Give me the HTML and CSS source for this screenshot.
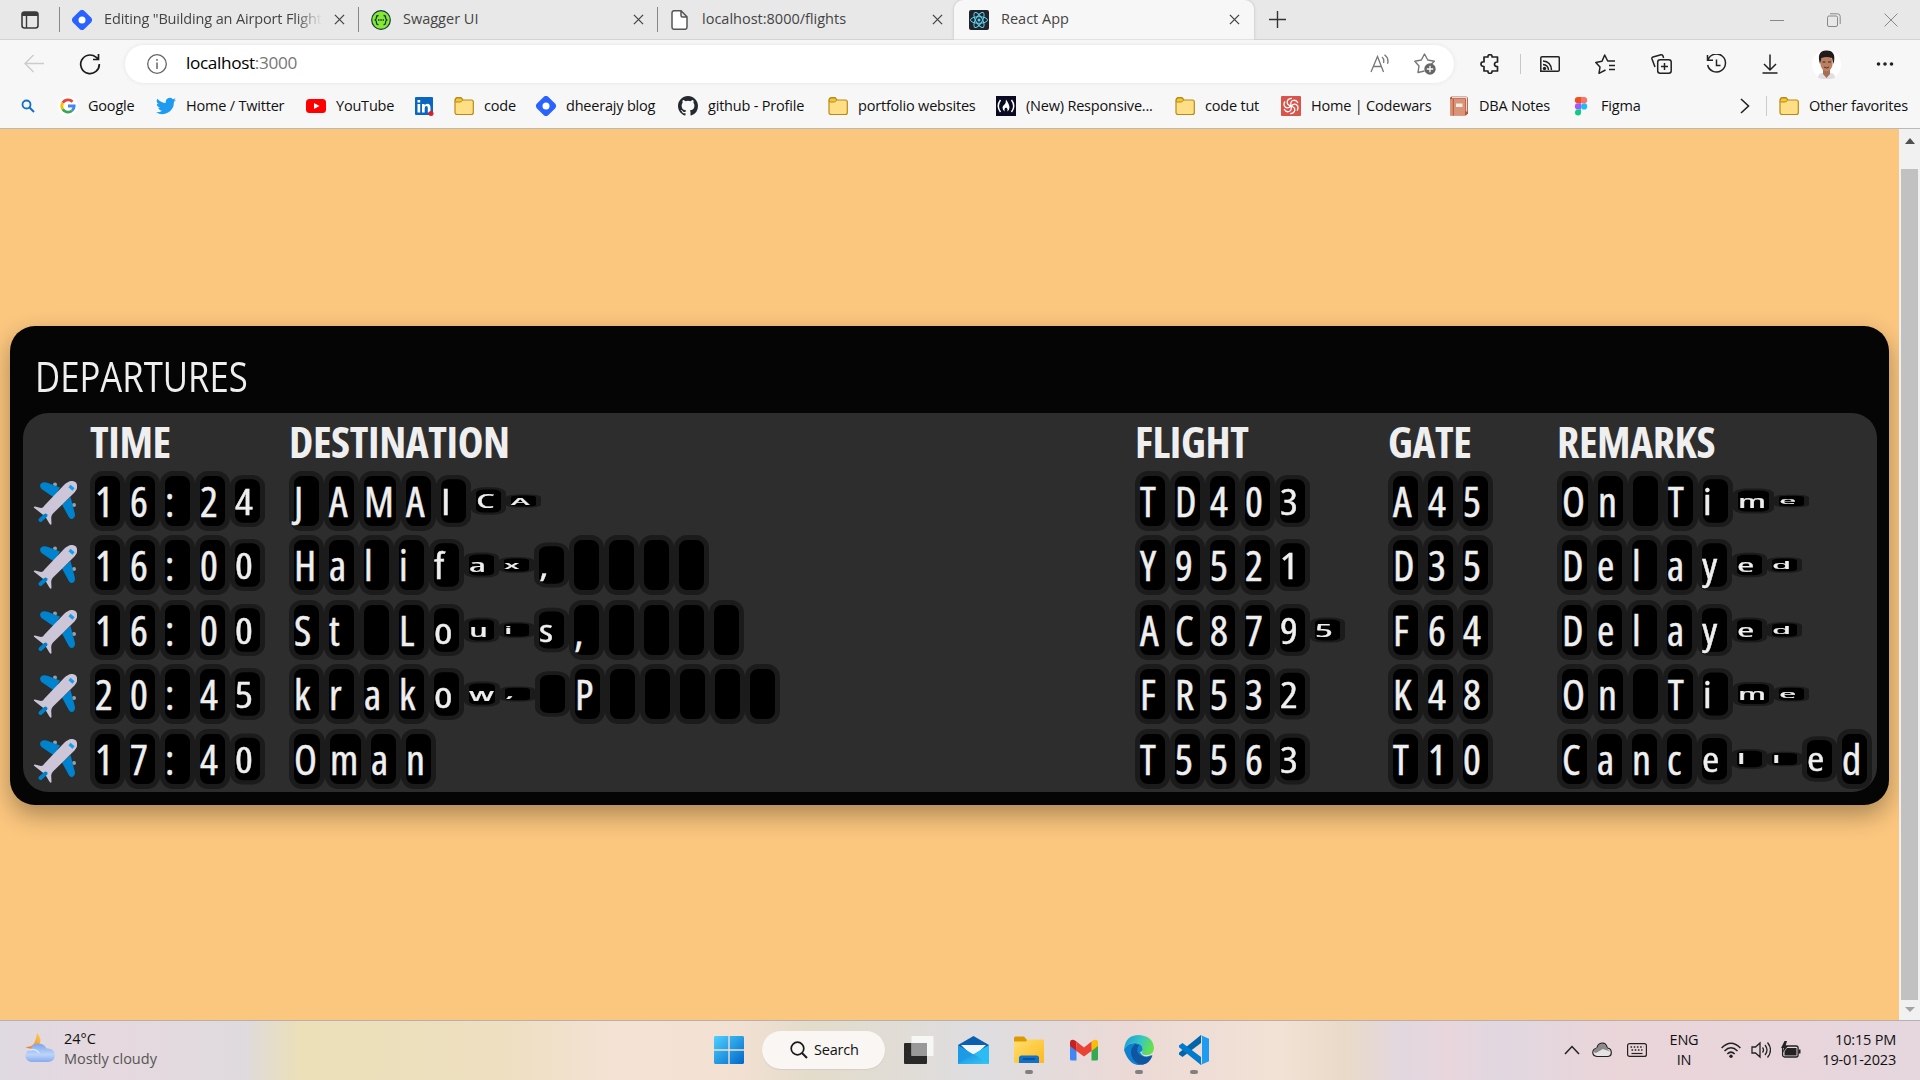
FILE: index.html
```
<!DOCTYPE html>
<html lang="en">
<head>
<meta charset="utf-8">
<title>React App</title>
<link rel="stylesheet" href="styles.css">
</head>
<body>
<svg class="defs" width="0" height="0">
  <defs>
    <symbol id="x" viewBox="0 0 12 12"><path d="M1 1l10 10M11 1L1 11" fill="none" stroke="currentColor" stroke-width="1.4"/></symbol>
    <symbol id="hash" viewBox="0 0 20 20"><path d="M7.600 1Q10-1.200 12.400 1L19 7.600Q21.200 10 19 12.400L12.400 19Q10 21.200 7.600 19L1 12.400Q-1.200 10 1 7.600Z" fill="#2962ff"/><circle cx="10" cy="10" r="3.5" fill="#fff"/></symbol>
    <symbol id="folder" viewBox="0 0 20 20"><path d="M1 4.500Q1 1.700 3.500 1.700H7L9 4h8.500Q19.300 4 19.300 6v10.500q0 2-2 2h-14Q1 18.500 1 16.500Z" fill="#ffdf85" stroke="#b98a12" stroke-width="1.200"/><path d="M1.300 5.500V4.300Q1.300 2 3.500 2H7l1.700 2-2 2H1.500Z" fill="#f3c63c" stroke="#b98a12"/></symbol>
    <linearGradient id="blue" x1="0" y1="0" x2="1" y2="1"><stop offset="0" stop-color="#4fd0ff"/><stop offset="1" stop-color="#0067c8"/></linearGradient>
    <linearGradient id="cloud" x1="0" y1="0" x2="0" y2="1"><stop offset="0" stop-color="#7ba4ee"/><stop offset=".6" stop-color="#bdd4f8"/><stop offset="1" stop-color="#86aaf0"/></linearGradient>
    <linearGradient id="moon" x1="0" y1="1" x2="1" y2="0"><stop offset="0" stop-color="#f0731d"/><stop offset="1" stop-color="#fcd053"/></linearGradient>
    <linearGradient id="files" x1="0" y1="0" x2="1" y2="1"><stop offset="0" stop-color="#ffdf70"/><stop offset="1" stop-color="#fcb91c"/></linearGradient>
    <linearGradient id="edgeTop" x1="0" y1="0" x2="1" y2=".3"><stop offset="0" stop-color="#159bdb"/><stop offset=".6" stop-color="#36c8c0"/><stop offset="1" stop-color="#64e050"/></linearGradient>
    <linearGradient id="mailFront" x1="0" y1="0" x2="1" y2="1"><stop offset="0" stop-color="#1c8ee0"/><stop offset="1" stop-color="#35c8f5"/></linearGradient>
    <symbol id="plane" viewBox="0 0 44 44"><g fill="#9aa0a6"><circle cx="22" cy="3.500" r="2"/><circle cx="41" cy="24" r="2"/></g><path d="M8 2.500Q11 .5 15 2l12 4.500-6 10L8.500 8Q6 5 8 2.500Z" fill="#0083cf"/><path d="M37.500 16l4.300 16.500q.8 4-2 5.300-2.500 1-4-1.800L29 23.500Z" fill="#0083cf"/><path d="M43 1.500q3 5-1.500 10L20 32.500q-1.500 1.500-1.800 4L18.500 43q-.5 1.500-1.800 0l-4.500-7.500L2 27.500Q-.5 25.500 2 25.500L8 27q2 0 3.500-2.500L31 4q7-6.500 12-2.500Z" fill="#cdc5d8"/><path d="M12.500 34.500L7.500 39" stroke="#0083cf" stroke-width="4" stroke-linecap="round"/><path d="M36.500 5l4 3.500" stroke="#10a0ee" stroke-width="3.200"/></symbol>
  </defs>
</svg>

<header class="browser">
  <div class="tabs">
    <div class="workspace"><svg width="18" height="18" viewBox="0 0 18 18"><rect x="1" y="1" width="16" height="16" rx="2.500" fill="none" stroke="#3b3b3b" stroke-width="1.600"/><path d="M1 5V3q0-2 2-2h12q2 0 2 2v2z" fill="#3b3b3b"/><path d="M5.500 5v12" stroke="#3b3b3b" stroke-width="1.400"/></svg></div>
    <div class="tab first"><svg width="20" height="20"><use href="#hash"/></svg><span class="title fade">Editing "Building an Airport Flight</span><svg class="close" width="11" height="11"><use href="#x"/></svg></div>
    <div class="tab"><svg width="20" height="20" viewBox="0 0 20 20"><circle cx="10" cy="10" r="9.300" fill="#85ea2d" stroke="#173647" stroke-width="1.200"/><path d="M7.500 5.500q-2 0-2 1.700t-1.300 2.800q1.300.8 1.300 2.800t2 1.700M12.500 5.500q2 0 2 1.700t1.300 2.800q-1.300.8-1.300 2.800t-2 1.700" fill="none" stroke="#173647" stroke-width="1.300"/><path d="M7 10h6" stroke="#173647" stroke-width="1.500" stroke-dasharray="1.500 .8"/></svg><span class="title">Swagger UI</span><svg class="close" width="11" height="11"><use href="#x"/></svg></div>
    <div class="tab"><svg width="20" height="20" viewBox="0 0 20 20"><path d="M2 3q0-2.300 2-2.300h7l6 6V17q0 2.300-2 2.300H4q-2 0-2-2.300zM11 1v4.500q0 1.500 1.500 1.500H17" fill="#fff" stroke="#555" stroke-width="1.500"/></svg><span class="title">localhost:8000/flights</span><svg class="close" width="11" height="11"><use href="#x"/></svg></div>
    <div class="tab active"><svg width="20" height="20" viewBox="0 0 20 20"><rect width="20" height="20" rx="2" fill="#20232a"/><g fill="none" stroke="#5fd3f3" stroke-width="1"><ellipse cx="10" cy="10" rx="8.500" ry="3.300"/><ellipse cx="10" cy="10" rx="8.500" ry="3.300" transform="rotate(60 10 10)"/><ellipse cx="10" cy="10" rx="8.500" ry="3.300" transform="rotate(120 10 10)"/></g><circle cx="10" cy="10" r="1.500" fill="#5fd3f3"/></svg><span class="title">React App</span><svg class="close" width="11" height="11"><use href="#x"/></svg></div>
    <svg class="plus" width="17" height="17" viewBox="0 0 17 17"><path d="M8.500 0v17M0 8.500h17" stroke="#333" stroke-width="1.400"/></svg>
    <div class="window">
      <svg width="14" height="14" viewBox="0 0 14 14"><path d="M0 7.500h14" stroke="#888"/></svg>
      <svg width="14" height="14" viewBox="0 0 14 14"><path d="M.5 4.500q0-1.500 1.500-1.500h7q1.500 0 1.500 1.500v7.500q0 1.500-1.500 1.500H2Q.5 13.500.5 12zM3 .8h7.500q2.700 0 2.700 2.700V11" fill="none" stroke="#888"/></svg>
      <svg width="14" height="14" viewBox="0 0 14 14"><path d="M.5.5l13 13M13.500.5l-13 13" stroke="#888"/></svg>
    </div>
  </div>

  <div class="toolbar">
    <svg class="back" width="20" height="20" viewBox="0 0 20 20"><path d="M20 9.500H1M9.500 1L1 9.500 9.500 18" fill="none" stroke="#ccc" stroke-width="1.400"/></svg>
    <svg class="reload" width="22" height="22" viewBox="0 0 22 22"><path d="M20.300 11A9.300 9.300 0 1 1 17 4.200l2.500 2M19.500 1v5.500H14" fill="none" stroke="#1b1b1b" stroke-width="1.700"/></svg>
    <div class="address">
      <svg width="20" height="20" viewBox="0 0 20 20"><circle cx="10" cy="10" r="9.300" fill="none" stroke="#666" stroke-width="1.300"/><path d="M10 8.500V15M10 5v1.700" stroke="#666" stroke-width="1.500"/></svg>
      <span class="url">localhost<i>:3000</i></span>
      <svg class="aloud" width="20" height="20" viewBox="0 0 20 20"><path d="M1 18L7.500 2.500 13.500 18M3.300 12.500h8" fill="none" stroke="#777" stroke-width="1.300"/><path d="M12 3q2.500 2.300 1.500 6M14.500.8q4.800 3.500 3 9" fill="none" stroke="#777" stroke-width="1.300"/></svg>
      <svg width="22" height="22" viewBox="0 0 22 22"><path d="M10.500 18L4 19.500 5 13 .8 8.300 7.300 7 10.500 1l3.300 6 6.500 1.300-3 3" fill="none" stroke="#777" stroke-width="1.400" stroke-linejoin="round"/><circle cx="16" cy="16" r="5.700" fill="#666"/><path d="M16 12.800v6.400M12.800 16h6.400" stroke="#fff" stroke-width="1.300"/></svg>
    </div>
    <div class="tools">
      <svg width="20" height="20" viewBox="0 0 20 20"><path d="M4 3h4q-.3-2.300 2-2.300T12 3h5.500v5q-3 0-3 2.300t3 2.200V17H12q.3 2.300-2 2.300T8 17H4v-4.500Q1 12.500 1 10t3-2.200z" fill="none" stroke="#222" stroke-width="1.700" stroke-linejoin="round"/></svg>
      <i class="bar"></i>
      <svg width="20" height="20" viewBox="0 0 20 20"><path d="M.8 16V4q0-1.300 1.300-1.300h16q1.200 0 1.200 1.300v12q0 1.300-1.200 1.300H.8zM3 7q8 .5 8.500 9M3 10.500q5 .3 5.500 5.500" fill="none" stroke="#222" stroke-width="1.500"/><circle cx="4.500" cy="14.500" r="1.700" fill="#222"/></svg>
      <svg width="21" height="20" viewBox="0 0 21 20"><path d="M10.500 16L4 19.300 5 13 .8 8.500 7 7.300 9.700 1l3 6H20M14 11.500h6M14 15.500h6" fill="none" stroke="#222" stroke-width="1.500" stroke-linejoin="round"/></svg>
      <svg width="21" height="20" viewBox="0 0 21 20"><path d="M4 13L1 5q-.5-1.500 1-2L10 .8q1.500-.3 2 1.200l.6 2" fill="none" stroke="#222" stroke-width="1.500"/><rect x="6.700" y="5.700" width="13.500" height="13.500" rx="2.500" fill="none" stroke="#222" stroke-width="1.500"/><path d="M13.500 9v7M10 12.500h7" stroke="#222" stroke-width="1.500"/></svg>
      <svg width="21" height="20" viewBox="0 0 21 20"><path d="M2 6A9 9 0 1 1 1.700 11M1.500 1v5.300H7M10.500 5.500v6h4" fill="none" stroke="#222" stroke-width="1.500"/></svg>
      <svg width="16" height="20" viewBox="0 0 16 20"><path d="M8 .5v15M2 10l6 6 6-6M.5 19h15" fill="none" stroke="#222" stroke-width="1.500"/></svg>
      <svg width="29" height="29" viewBox="0 0 29 29"><circle cx="14.500" cy="14.500" r="14.500" fill="#fff"/><path d="M6 28q0-5 5-5h7q5 0 5 5l-4 1h-9z" fill="#e0dde3"/><path d="M11 19v5l3.500 4 3.500-4v-5z" fill="#a66f51"/><ellipse cx="14.500" cy="13" rx="6.200" ry="8.500" fill="#bb8062"/><path d="M8 14Q4 1 14 .5 25 0 21.500 14l-1.500-6q-5.500-2-10.500 0z" fill="#211b1a"/><path d="M10.500 12h3M16 12h3" stroke="#392620" stroke-width="1.200"/><path d="M12 17q2.500 2 5 0" fill="none" stroke="#5b2f29"/></svg>
      <svg width="18" height="6" viewBox="0 0 18 6"><g fill="#222"><circle cx="2.500" cy="3" r="1.800"/><circle cx="9" cy="3" r="1.800"/><circle cx="15.500" cy="3" r="1.800"/></g></svg>
    </div>
  </div>

  <nav class="bookmarks">
    <a class="lens"><svg width="20" height="20" viewBox="0 0 20 20"><circle cx="8.500" cy="8.500" r="4" fill="none" stroke="#1470c8" stroke-width="1.800"/><path d="M11.500 11.500l4.500 4.500" stroke="#1470c8" stroke-width="2"/></svg></a>
    <a><svg width="20" height="20" viewBox="0 0 20 20"><circle cx="10" cy="10" r="10" fill="#fff"/><g fill="none" stroke-width="2.800"><path d="M4.700 6.800A6.200 6.200 0 0 1 14.500 5.700" stroke="#ea4335"/><path d="M4.700 6.800a6.200 6.200 0 0 0 0 6.400" stroke="#fbbc05"/><path d="M4.700 13.200A6.200 6.200 0 0 0 14 14.700" stroke="#34a853"/><path d="M14 14.700Q16.200 13 16.200 10H10" stroke="#4285f4"/></g></svg>Google</a>
    <a><svg width="20" height="20" viewBox="0 0 24 24"><path d="M24 4.600a10 10 0 0 1-2.800.8 5 5 0 0 0 2.100-2.700 10 10 0 0 1-3.100 1.200 4.900 4.900 0 0 0-8.400 4.500A14 14 0 0 1 1.700 3.200a4.900 4.900 0 0 0 1.500 6.600 5 5 0 0 1-2.200-.6 4.900 4.900 0 0 0 3.900 4.900 5 5 0 0 1-2.200.1 4.900 4.900 0 0 0 4.600 3.400A10 10 0 0 1 0 19.500a14 14 0 0 0 21.500-12.400A10 10 0 0 0 24 4.600z" fill="#1d9bf0"/></svg>Home / Twitter</a>
    <a><svg width="20" height="20" viewBox="0 0 20 20"><rect y="3" width="20" height="14" rx="3.500" fill="red"/><path d="M8 7l5.500 3L8 13z" fill="#fff"/></svg>YouTube</a>
    <a><svg width="20" height="20" viewBox="0 0 20 20"><rect x="1" y="1" width="18" height="18" rx="1" fill="#0a66c2"/><path d="M3.500 8h2.700v8.500H3.500zM3.500 4h2.700v2.500H3.500zM8 8h2.600v1.200Q11.500 7.700 13.300 7.700q3.200 0 3.200 4v4.800h-2.700V12q0-2-1.400-2-1.700 0-1.700 2.200v4.300H8z" fill="#fff"/><circle cx="17" cy="17.500" r="2.500" fill="#dc1f26"/></svg></a>
    <a><svg width="20" height="20"><use href="#folder"/></svg>code</a>
    <a><svg width="20" height="20"><use href="#hash"/></svg>dheerajy blog</a>
    <a><svg width="20" height="20" viewBox="0 0 16 16"><path d="M8 0C3.580 0 0 3.580 0 8c0 3.540 2.290 6.530 5.470 7.590.4.070.55-.17.55-.38 0-.19-.01-.82-.01-1.490-2.010.37-2.530-.49-2.690-.94-.09-.23-.48-.94-.82-1.130-.28-.15-.68-.52-.01-.53.63-.01 1.080.58 1.230.82.72 1.210 1.870.87 2.330.66.07-.52.28-.87.51-1.070-1.780-.2-3.640-.89-3.640-3.950 0-.87.31-1.590.82-2.150-.08-.2-.36-1.020.08-2.120 0 0 .67-.21 2.200.82a7.600 7.600 0 0 1 4 0c1.530-1.040 2.200-.82 2.200-.82.44 1.100.16 1.920.08 2.120.51.56.82 1.270.82 2.150 0 3.070-1.870 3.750-3.650 3.950.29.25.54.73.54 1.480 0 1.070-.01 1.930-.01 2.200 0 .21.15.46.55.38A8 8 0 0 0 16 8c0-4.420-3.580-8-8-8z" fill="#24292f"/></svg>github - Profile</a>
    <a><svg width="20" height="20"><use href="#folder"/></svg>portfolio websites</a>
    <a><svg width="20" height="20" viewBox="0 0 20 20"><rect width="20" height="20" fill="#0a0a23"/><path d="M4.500 4Q0 10 4.500 16M15.500 4Q20 10 15.500 16" fill="none" stroke="#fff" stroke-width="1.500"/><path d="M10 3.500q3.500 5 3.500 8t-2.500 4q1.500-2.500-1-4-2.500 1.500-1 4-2.500-1-2.500-4 0-1.500 2-3 1.500-1.500 1.500-5z" fill="#fff"/></svg>(New) Responsive...</a>
    <a><svg width="20" height="20"><use href="#folder"/></svg>code tut</a>
    <a><svg width="20" height="20" viewBox="0 0 20 20"><rect width="20" height="20" rx="1" fill="#d9544b"/><g fill="none" stroke="#fff" stroke-width="1.300"><path id="swirl" d="M10 10Q9 5.500 12 4.500t5 2.500"/><use href="#swirl" transform="rotate(60 10 10)"/><use href="#swirl" transform="rotate(120 10 10)"/><use href="#swirl" transform="rotate(180 10 10)"/><use href="#swirl" transform="rotate(240 10 10)"/><use href="#swirl" transform="rotate(300 10 10)"/></g></svg>Home | Codewars</a>
    <a><svg width="20" height="20" viewBox="0 0 20 20"><path d="M1 2.500Q1 .5 3 .5h14q2 0 2 2v15l-2 2H1z" fill="#b9563e"/><path d="M3 1.500h14.500v14" fill="none" stroke="#e8d9d3" stroke-width="1.300"/><path d="M1 4q0-1 1.500-1H16v16.500H1z" fill="#d99376"/><path d="M4.300 3v16.500" stroke="#b9563e"/><rect x="7" y="7.500" width="6.500" height="3.500" fill="#f5ebe7"/></svg>DBA Notes</a>
    <a><svg width="20" height="20" viewBox="0 0 20 20"><path d="M7 1h3v6.300H7A3.150 3.150 0 0 1 7 1z" fill="#f24e1e"/><path d="M10 1h3a3.150 3.150 0 0 1 0 6.300h-3z" fill="#ff7262"/><path d="M7 7.300h3v6.200H7a3.100 3.100 0 0 1 0-6.200z" fill="#a259ff"/><circle cx="13.100" cy="10.400" r="3.100" fill="#1abcfe"/><path d="M7 13.500h3v3a3 3 0 1 1-3-3z" fill="#0acf83"/></svg>Figma</a>
    <svg class="more" width="10" height="16" viewBox="0 0 10 16"><path d="M1 1l7.500 7L1 15" fill="none" stroke="#222" stroke-width="1.600"/></svg>
    <a class="other"><svg width="20" height="20"><use href="#folder"/></svg>Other favorites</a>
  </nav>
</header>

<div class="viewport">
  <main class="page">
    <section class="board">
      <h1>DEPARTURES</h1>
      <div class="panel">
        <div class="row head"><span></span><b>TIME</b><b>DESTINATION</b><b>FLIGHT</b><b>GATE</b><b>REMARKS</b></div>
        <div id="flights"></div>
      </div>
    </section>
  </main>
  <div class="scroll"><i class="up"></i><div class="thumb"></div><i class="down"></i></div>
</div>

<footer class="taskbar">
  <div class="weather">
    <svg width="32" height="32" viewBox="0 0 32 32"><path d="M13 1q6.500 7 1 12.500T1.500 15Q9 15 11 9.500 12.500 5.500 13 1z" fill="url(#moon)"/><path d="M7 30a6.300 6.300 0 0 1-.3-12.500Q8 11 15 11.500q5.500.5 7.500 5 8-.5 8.500 6.500-.5 7-7 7z" fill="url(#cloud)"/><path d="M5 18q7-2 10 3" fill="none" stroke="#d8e6fc" stroke-width="1.500"/></svg>
    <p>24°C<br><span>Mostly cloudy</span></p>
  </div>
  <div class="apps">
    <svg class="start" width="30" height="30" viewBox="0 0 30 30"><path d="M1 1h13.300v13.300H0V2zM15.700 1H29l1 1v12.300H15.700zM0 15.700h14.300V29H1l-1-1zM15.700 15.700H30V28l-1 1H15.700z" fill="url(#blue)"/></svg>
    <div class="search"><svg width="18" height="18" viewBox="0 0 18 18"><circle cx="7.500" cy="7.500" r="6.300" fill="none" stroke="#1a1a1a" stroke-width="1.700"/><path d="M12 12l5 5" stroke="#1a1a1a" stroke-width="2"/></svg>Search</div>
    <span class="app"><svg width="30" height="30" viewBox="0 0 30 30"><rect y="8" width="23" height="21" rx="1" fill="#292929"/><rect x="7.500" y="1" width="22" height="20" rx="1" fill="#fff" fill-opacity=".75"/><path d="M7.500 8H23v13H7.500z" fill="#999"/></svg></span>
    <span class="app"><svg width="31" height="30" viewBox="0 0 31 30"><path d="M0 10L15.500 1 31 10v6H0z" fill="#0a5fb0"/><path d="M3 10h25L15.500 22z" fill="#f2f6fb"/><path d="M0 10l31 19H0z" fill="#1b9be6"/><path d="M31 10v19L15 19.500z" fill="#2abcf3"/><path d="M0 29l15.500-10L31 29z" fill="url(#mailFront)"/></svg></span>
    <span class="app run"><svg width="30" height="30" viewBox="0 0 30 30"><path d="M0 3q0-1.500 1.500-1.500H10l3 3.500v4H0z" fill="#dc9900"/><path d="M0 6.500h12l1.500-2H28.500q1.500 0 1.500 1.500v22H1.500Q0 28 0 26.500z" fill="url(#files)"/><path d="M5 28v-5q0-2.500 2.500-2.500h15Q25 20.500 25 23v5z" fill="#1270c7"/><path d="M9 24h12" stroke="#074b95" stroke-width="1.500"/></svg></span>
    <span class="app gmail"><svg width="28" height="22" viewBox="0 0 28 22"><path d="M0 3v17q0 1.500 1.500 1.500H6.500V8z" fill="#4285f4"/><path d="M28 3v17q0 1.500-1.500 1.500h-5V8z" fill="#34a853"/><path d="M21.500 2.500L24 1q3.500-1 4 2v4l-6.500 5z" fill="#fbbc04"/><path d="M0 3Q.5 0 4 1l2.500 1.500V12L0 7z" fill="#c5221f"/><path d="M6.500 2.500L14 8.500l7.500-6V12L14 17.500 6.500 12z" fill="#ea4335"/></svg></span>
    <span class="app run"><svg width="30" height="30" viewBox="0 0 30 30"><path d="M0 15Q2 8 11 8q8 0 8 7-1 2-3 2 3 7 12 3Q25 30 15 30T0 15z" fill="#0f7fd0"/><path d="M11 9q-7 7-2 15 4 6 10 5.500Q26 28 28.500 20.500q-6 3-11 .5Q10 17 15 10z" fill="#1055a0"/><path d="M0 15Q1 0 15 0q14 1 15 13-.5 7-7 7-5 0-5.500-2 3-5-1.500-8.500Q7 4 0 15z" fill="url(#edgeTop)"/></svg></span>
    <span class="app run"><svg width="30" height="30" viewBox="0 0 30 30"><path d="M22 0v8L3.500 22 0 19.500v-1.700z" fill="#0065a9"/><path d="M22 30v-8L3.500 8 0 10.500v1.700z" fill="#007acc"/><path d="M21.500 0L30 3.800v22.400L21.500 30q1.500-1 1.500-3V3q0-2-1.500-3z" fill="#1f9cf0"/></svg></span>
  </div>
  <div class="tray">
    <svg width="16" height="10" viewBox="0 0 16 10"><path d="M1 9l7-7.500L15 9" fill="none" stroke="#222" stroke-width="1.500"/></svg>
    <svg width="20" height="16" viewBox="0 0 20 16"><path d="M5 14.500Q.8 14 .8 10.500T5 6q1-4.500 5-4.800T15.300 6q4 .5 4 4.500t-4 4z" fill="#e6e3e5" stroke="#222" stroke-width="1.200"/><path d="M1.400 10q1-3.500 4-4 1-4 4.600-4.200T14.800 6.500l3.500 3-7.500-2.500L4 11z" fill="#8b898c"/></svg>
    <svg width="20" height="14" viewBox="0 0 20 14"><rect x=".6" y=".6" width="18.800" height="12.800" rx="2" fill="none" stroke="#222" stroke-width="1.200"/><path d="M3.500 4h13M4.500 7h11" stroke="#222" stroke-width="1.500" stroke-dasharray="1.600 1.600"/><path d="M4.500 10.500h11" stroke="#222" stroke-width="1.200"/></svg>
    <p class="lang">ENG<br>IN</p>
    <svg width="20" height="16" viewBox="0 0 20 16"><g fill="none" stroke="#222" stroke-width="1.500"><path d="M.6 6q9.400-9.500 18.800 0M3.500 9q6.500-6.500 13 0M6.300 12q3.700-3.700 7.400 0"/></g><circle cx="10" cy="14.200" r="1.700" fill="#222"/></svg>
    <svg width="20" height="18" viewBox="0 0 20 18"><path d="M1 6h3.500L9 2v14l-4.500-4H1zM11.500 6.500q2 2.500 0 5M14 4q4 5 0 10M16.500 1.500q6 7.500 0 15" fill="none" stroke="#222" stroke-width="1.300"/></svg>
    <svg width="20" height="18" viewBox="0 0 20 18"><rect x="1.600" y="5" width="15.500" height="11" rx="2" fill="none" stroke="#222" stroke-width="1.300"/><path d="M6 7h9.500v7.500H3.500v-4zM17.500 8.500h2v4h-2zM3.500 0L0 7h3l-1.500 5L7 5H4.500L6 0z" fill="#222"/></svg>
    <p class="clock">10:15 PM<br>19-01-2023</p>
  </div>
</footer>
<script src="flights.js"></script>
</body>
</html>
```
FILE: styles.css
```
* { box-sizing: border-box; }
body { margin: 0; height: 1080px; overflow: hidden; display: flex; flex-direction: column; font: 14.500px/20px "Open Sans", sans-serif; letter-spacing: -.2px; color: #111; }
svg { display: block; flex: none; }
.defs { position: absolute; }
p { margin: 0; }

.browser { height: 129px; flex: none; background: #f7f7f7; border-bottom: 1px solid #b9b9b9; }
.tabs { height: 40px; display: flex; align-items: center; background: #e8e8e8; border-bottom: 1px solid #d3d3d3; color: #444; letter-spacing: 0; }
.workspace { width: 59px; padding-left: 21px; }
.tab { width: 299px; height: 40px; display: flex; align-items: center; gap: 12px; padding: 0 13px 0 12px; }
.tab::before { content: ""; width: 1px; height: 25px; margin-left: -12px; background: #888; }
.tab .title { flex: 1; white-space: nowrap; overflow: hidden; padding-bottom: 2px; }
.tab .fade { letter-spacing: -.15px; -webkit-mask-image: linear-gradient(90deg, #000 88%, transparent); mask-image: linear-gradient(90deg, #000 88%, transparent); }
.tab.active { width: 300px; margin-left: -2px; padding: 0 14px 0 15px; background: #f7f7f7; border-radius: 9px 9px 0 0; box-shadow: 0 0 3px #bbb; clip-path: inset(0 -4px 0 -4px); }
.tab.active::before { display: none; }
.close { color: #444; }
.plus { margin-left: 15px; }
.window { margin-left: auto; margin-right: 22px; display: flex; gap: 43px; }

.toolbar { height: 48px; display: flex; align-items: center; }
.back { margin-left: 24px; }
.reload { margin-left: 35px; }
.address { width: 1329px; height: 38px; margin-left: 24px; padding: 0 18px 0 22px; display: flex; align-items: center; border-radius: 19px; background: #fff; box-shadow: 0 0 4px #e4e4e4; }
.url { margin-left: 19px; padding-bottom: 2px; flex: 1; font-size: 17.200px; letter-spacing: -.35px; color: #000; }
.url i { font-style: normal; color: #777; }
.aloud { margin-right: 24px; }
.tools { flex: 1; margin-left: 26px; margin-right: 26px; display: flex; align-items: center; justify-content: space-between; }
.bar { width: 1px; height: 20px; margin: 0 -15px; background: #c8c8c8; }

.bookmarks { height: 35px; display: grid; grid-template-columns: 40px 98px 150px 108px 40px 82px 142px 150px 168px 179px 106px 168px 122px 169px 26px 1fr; align-items: center; padding-left: 18px; color: #111; }
.bookmarks a { display: flex; align-items: center; gap: 10px; white-space: nowrap; }
.bookmarks .other { padding-left: 12px; border-left: 1px solid #ccc; }

.viewport { height: 891px; flex: none; display: flex; }
.page { width: 1899px; background: #fbc67e; padding: 197px 10px 0; }
.board { height: 479px; padding: 13px 12px 13px 13px; border-radius: 25px; background: #050505; color: #efefef; box-shadow: 0 10px 24px rgba(0, 0, 0, .32); letter-spacing: 0; }
h1 { margin: 0 0 0 12px; height: 74px; font-size: 42px; line-height: 74px; font-weight: 400; transform: scaleX(.826); transform-origin: left; }
.panel { height: 379px; border-radius: 25px; background: #2d2d2d; }
.row { height: 64.500px; padding-left: 10px; display: grid; grid-template-columns: 57px 199px 846px 253px 169px 1fr; align-items: start; }
.head { height: 57.700px; font-size: 43.500px; line-height: 57px; font-stretch: 75%; letter-spacing: -.4px; }
.plane { margin-top: 10px; }
.word { display: flex; }
.cell { min-width: 35px; height: 60px; border: 5px solid #1b1b1b; border-radius: 13px; background: #000; font-size: 42px; line-height: 50px; font-stretch: 75%; -webkit-text-stroke: .5px #efefef; }
.cell.o { min-width: 36px; }
.cell.m { min-width: 41px; }
.cell.M { min-width: 42px; }

.scroll { width: 21px; display: flex; flex-direction: column; align-items: center; background: #f1f1f1; }
.up, .down { border: 5px solid transparent; }
.up { height: 11px; margin: 4px 0 25px; border-bottom: 6px solid #505050; }
.thumb { width: 17px; height: 831px; background: #c1c1c1; }
.down { margin-top: 7px; border-top-color: #a3a3a3; }

.taskbar { height: 60px; display: grid; grid-template-columns: 714px 1fr auto; border-top: 1px solid #b5b0b3; background: linear-gradient(90deg, #dfd9e1 0, #e6d9df 110px, #dfdadd 245px, #ebe0b8 300px, #eddfc0 500px, #f4e2d5 620px, #f2e0d3 740px, #e3dccb 810px, #dedde0 980px, #ecd9d6 1130px, #f2e2d5 1280px, #e9dac8 1345px, #e2d7df 1400px, #e8d6dc 1450px, #e1d7e0 1500px, #ead5d9 1620px, #e6d6dd 1900px); }
.weather { display: flex; gap: 8px; padding: 8px 0 0 24px; align-items: flex-start; letter-spacing: 0; }
.weather svg { margin-top: 3px; }
.weather span { color: #555; }
.apps, .tray { height: 58px; display: flex; align-items: center; }
.search { width: 123px; height: 38px; margin: 0 6px 0 18px; padding-left: 28px; display: flex; align-items: center; gap: 6px; border-radius: 19px; background: #faf6f3; box-shadow: 0 1px 1px #d8ccc5; }
.app { width: 55px; height: 58px; display: flex; align-items: center; justify-content: center; position: relative; }
.run::after { content: ""; position: absolute; left: 24px; top: 49px; width: 8px; height: 4px; border-radius: 2px; background: #808080; }
.tray { padding-right: 24px; }
.tray p { margin-top: -1px; }
.tray svg:nth-child(2) { margin-left: 12px; }
.tray svg:nth-child(3) { margin-left: 15px; }
.tray .lang { width: 30px; margin: 0 22px; text-align: center; }
.tray svg:nth-of-type(n+5) { margin-left: 10px; }
.clock { width: 95px; text-align: right; }
```
FILE: flights.js
```
// Each word is followed by the flip scale of the cells that are still turning: {index: scaleY}
const last = { 4: 0.867 };
const flights = [
  [["16:24", last], ["JAMAICA", { 4: 0.867, 5: 0.46, 6: 0.22 }], ["TD403", last], ["A45", {}], ["On Time", { 4: 0.867, 5: 0.42, 6: 0.21 }]],
  [["16:00", last], ["Halifax,    ", { 4: 0.867, 5: 0.42, 6: 0.26, 7: 0.75 }], ["Y9521", last], ["D35", {}], ["Delayed", { 4: 0.867, 5: 0.41, 6: 0.255 }]],
  [["16:00", last], ["St Louis,    ", { 4: 0.867, 5: 0.42, 6: 0.26, 7: 0.74 }], ["AC8795", { 4: 0.867, 5: 0.42 }], ["F64", {}], ["Delayed", { 4: 0.867, 5: 0.42, 6: 0.26 }]],
  [["20:45", last], ["krakow, P     ", { 4: 0.867, 5: 0.42, 6: 0.25, 7: 0.76 }], ["FR532", { 4: 0.85 }], ["K48", {}], ["On Time", { 4: 0.86, 5: 0.4, 6: 0.25 }]],
  [["17:40", { 4: 0.85 }], ["Oman", {}], ["T5563", { 4: 0.85 }], ["T10", {}], ["Cancelled", { 4: 0.84, 5: 0.33, 6: 0.24, 7: 0.76 }]]
];
const wide = { M: " M", m: " m", O: " o", w: " o" };
const word = ([text, scales]) => `<div class="word">${[...text].map((c, i) =>
  `<span class="cell${wide[c] || ""}"${scales[i] ? ` style="transform:scaleY(${scales[i]})"` : ""}>${c}</span>`).join("")}</div>`;
document.getElementById("flights").innerHTML = flights.map(row =>
  `<div class="row"><svg class="plane" width="44" height="44"><use href="#plane"/></svg>${row.map(word).join("")}</div>`).join("");
```
